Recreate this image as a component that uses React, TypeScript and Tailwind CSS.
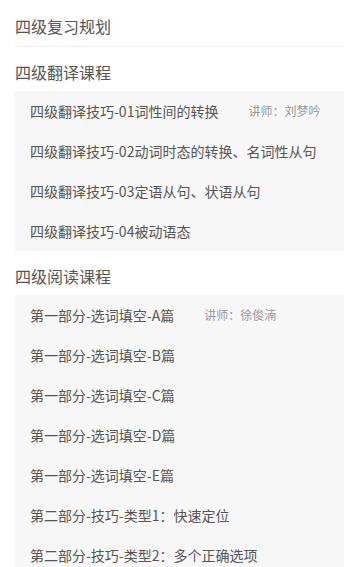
const translation = [
  { title: "四级翻译技巧-01词性间的转换", teacher: "讲师：刘梦吟" },
  { title: "四级翻译技巧-02动词时态的转换、名词性从句" },
  { title: "四级翻译技巧-03定语从句、状语从句" },
  { title: "四级翻译技巧-04被动语态" },
];

const reading = [
  { title: "第一部分-选词填空-A篇", teacher: "讲师：徐俊湳" },
  { title: "第一部分-选词填空-B篇" },
  { title: "第一部分-选词填空-C篇" },
  { title: "第一部分-选词填空-D篇" },
  { title: "第一部分-选词填空-E篇" },
  { title: "第二部分-技巧-类型1：快速定位" },
  { title: "第二部分-技巧-类型2：多个正确选项" },
];

type Lesson = { title: string; teacher?: string };

function LessonList({ items }: { items: Lesson[] }) {
  return (
    <ul className="bg-[#f7f7f7]">
      {items.map((it) => (
        <li key={it.title} className="flex h-[40px] items-center px-[15px] text-[14px] text-[#555]">
          <span className="whitespace-nowrap">{it.title}</span>
          {it.teacher && (
            <span className="ml-[30px] whitespace-nowrap text-[12px] text-[#999]">{it.teacher}</span>
          )}
        </li>
      ))}
    </ul>
  );
}

export default function App() {
  return (
    <div
      className="min-h-[567px] overflow-hidden bg-white pl-[15px]"
      style={{ fontFamily: '"Microsoft YaHei", "Noto Sans CJK SC", "Noto Sans", sans-serif' }}
    >
      <h2 className="border-b border-[#eeeeee] pt-[15px] pb-[9px] text-[16px] leading-[22px] text-[#555]">
        四级复习规划
      </h2>
      <h2 className="pt-[14px] pb-[8px] text-[16px] leading-[22px] text-[#555]">四级翻译课程</h2>
      <LessonList items={translation} />
      <h2 className="pt-[14px] pb-[8px] text-[16px] leading-[22px] text-[#555]">四级阅读课程</h2>
      <LessonList items={reading} />
    </div>
  );
}
